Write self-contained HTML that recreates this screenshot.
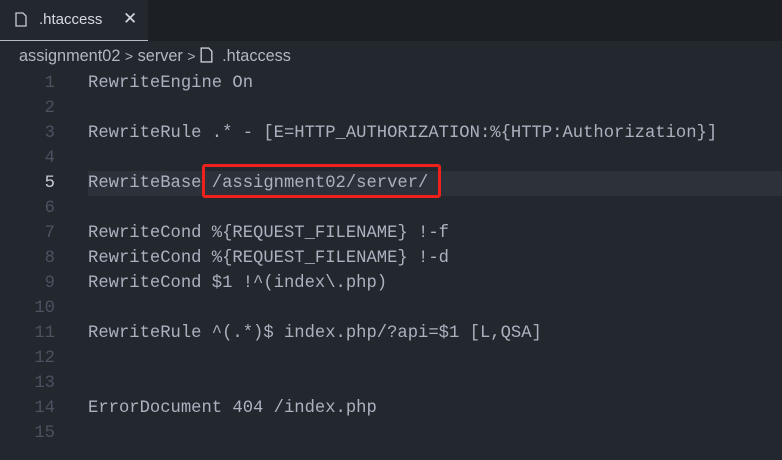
<!DOCTYPE html>
<html><head><style>
body{margin:0;width:782px;height:460px;background:#23272e;overflow:hidden;font-family:"Liberation Sans",sans-serif;position:relative}
.tabbar{position:absolute;left:0;top:0;width:782px;height:41px;background:#1c2025}
.tab{position:absolute;left:0;top:0;width:148px;height:41px;background:#23272e;border-bottom:1px solid #b8bcc2;box-sizing:border-box}
.tab span{position:absolute;left:39px;top:11px;color:#d7dae0;font-size:15px}
.x{position:absolute;left:123px;top:9px;color:#d7dae0;font-size:17px}
.bc{position:absolute;left:19px;top:47px;color:#b3b8c0;font-size:16.3px;white-space:nowrap}
.line{position:absolute;left:0;height:25px;width:782px;font-family:"Liberation Mono",monospace;font-size:17.2px;line-height:25px;color:#abb2bf;white-space:pre}
.n{position:absolute;left:0;width:55px;text-align:right;color:#4b5260}
.c{position:absolute;left:88px}
.hl{position:absolute;left:88px;top:171px;width:694px;height:25px;background:#2c313a}
.box{position:absolute;left:202px;top:164px;width:239px;height:34px;border:3px solid #f0201c;border-radius:3px;box-sizing:border-box}
</style></head><body>
<div class="tabbar"><div class="tab">
<svg style="position:absolute;left:15px;top:12px" width="12" height="15" viewBox="0 0 12 15"><path d="M1 1h7l3 3v10H1z" fill="none" stroke="#c8ccd2" stroke-width="1.3"/></svg>
<span>.htaccess</span><div class="x">✕</div></div></div>
<div class="bc">assignment02 <span style="font-size:14px">&gt;</span> server <span style="font-size:14px">&gt;</span> <svg width="13" height="16" viewBox="0 0 12 15" style="vertical-align:-2px"><path d="M1 1h7l3 3v10H1z" fill="none" stroke="#c8ccd2" stroke-width="1.3"/></svg>&nbsp;&nbsp;.htaccess</div>
<div class="hl"></div>
<div class="line" style="top:71px"><span class="n">1</span><span class="c">RewriteEngine On</span></div>
<div class="line" style="top:96px"><span class="n">2</span></div>
<div class="line" style="top:121px"><span class="n">3</span><span class="c">RewriteRule .* - [E=HTTP_AUTHORIZATION:%{HTTP:Authorization}]</span></div>
<div class="line" style="top:146px"><span class="n">4</span></div>
<div class="line" style="top:171px"><span class="n" style="color:#c8ccd2">5</span><span class="c">RewriteBase /assignment02/server/</span></div>
<div class="line" style="top:196px"><span class="n">6</span></div>
<div class="line" style="top:221px"><span class="n">7</span><span class="c">RewriteCond %{REQUEST_FILENAME} !-f</span></div>
<div class="line" style="top:246px"><span class="n">8</span><span class="c">RewriteCond %{REQUEST_FILENAME} !-d</span></div>
<div class="line" style="top:271px"><span class="n">9</span><span class="c">RewriteCond $1 !^(index\.php)</span></div>
<div class="line" style="top:296px"><span class="n">10</span></div>
<div class="line" style="top:321px"><span class="n">11</span><span class="c">RewriteRule ^(.*)$ index.php/?api=$1 [L,QSA]</span></div>
<div class="line" style="top:346px"><span class="n">12</span></div>
<div class="line" style="top:371px"><span class="n">13</span></div>
<div class="line" style="top:396px"><span class="n">14</span><span class="c">ErrorDocument 404 /index.php</span></div>
<div class="line" style="top:421px"><span class="n">15</span></div>
<div class="box"></div>
</body></html>
